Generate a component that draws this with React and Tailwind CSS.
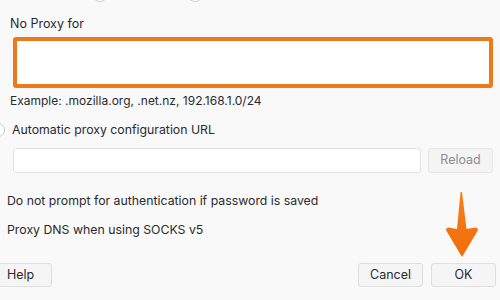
export default function App() {
  return (
    <div
      className="relative w-[500px] h-[300px] overflow-hidden bg-[#f9f9fa] text-[#2a2a2e]"
      style={{ fontFamily: '"Inter", "Liberation Sans", sans-serif' }}
    >
      {/* cut-off radio buttons at top */}
      <div className="relative h-[4px]">
        <div className="absolute left-[92px] top-[-14px] w-[16px] h-[16px] rounded-full border border-[#d0d0d4] bg-white" />
        <div className="absolute left-[187px] top-[-14px] w-[16px] h-[16px] rounded-full border border-[#d0d0d4] bg-white" />
      </div>

      <div className="flex flex-col">
        <div className="pl-[10px] mt-[12px] h-[16px] text-[12.5px] leading-[16px]">No Proxy for</div>

        <div className="ml-[13px] mr-[7px] mt-[5px] h-[51px] rounded-[3px] border-[4px] border-[#ec7a1c] bg-white" />

        <div className="pl-[10px] mt-[5px] h-[16px] text-[12px] leading-[16px]">
          Example: .mozilla.org, .net.nz, 192.168.1.0/24
        </div>

        <div className="flex items-center mt-[12px] h-[18px]">
          <div className="ml-[-9px] w-[14px] h-[14px] rounded-full border border-[#c8c8cc] bg-white" />
          <span className="ml-[7px] text-[12.3px] leading-[16px]">Automatic proxy configuration URL</span>
        </div>

        <div className="flex items-center mt-[9px] h-[25px]">
          <div className="ml-[13px] w-[408px] h-[25px] rounded-[3px] border border-[#e1e1e3] bg-white" />
          <div className="ml-[7px] w-[65px] h-[25px] rounded-[3px] border border-[#e6e6e8] bg-[#f4f4f5] flex items-center justify-center text-[12.5px] text-[#8d8d91]">
            Reload
          </div>
        </div>

        <div className="pl-[7px] mt-[20px] h-[16px] text-[12.3px] leading-[16px]">
          Do not prompt for authentication if password is saved
        </div>

        <div className="pl-[7px] mt-[13px] h-[16px] text-[12.3px] leading-[16px]">
          Proxy DNS when using SOCKS v5
        </div>

        <div className="flex items-center mt-[25px] h-[24px]">
          <div className="ml-[-10px] w-[62px] h-[24px] rounded-[3px] border border-[#dededf] bg-[#f5f5f6] flex items-center text-[12.5px] pl-[16px]">
            Help
          </div>
          <div className="flex-1" />
          <div className="w-[65px] h-[24px] rounded-[3px] border border-[#dededf] bg-[#f5f5f6] flex items-center justify-center text-[12.5px]">
            Cancel
          </div>
          <div className="ml-[8px] mr-[4px] w-[65px] h-[24px] rounded-[3px] border border-[#dededf] bg-[#f5f5f6] flex items-center justify-center text-[12.5px]">
            OK
          </div>
        </div>
      </div>

      {/* orange arrow */}
      <svg className="absolute left-[440px] top-[188px]" width="44" height="74" viewBox="0 0 44 74">
        <defs>
          <linearGradient id="ag" x1="0" y1="0" x2="0" y2="1">
            <stop offset="0" stopColor="#f7801a" />
            <stop offset="1" stopColor="#f06c0a" />
          </linearGradient>
        </defs>
        <path
          d="M20.5 4 L22 4 L26.5 41 L35.5 39.5 Q39 40 37.5 43 L22 69 L6.5 43 Q5 40 8.5 39.5 L17 41 Z"
          fill="url(#ag)"
        />
      </svg>
    </div>
  );
}
